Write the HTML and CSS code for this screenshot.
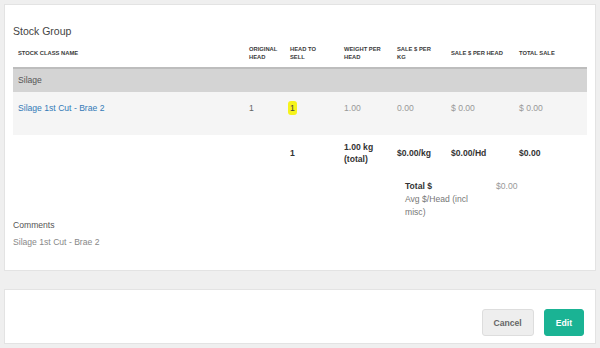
FILE: index.html
```html
<!DOCTYPE html>
<html lang="en">
<head>
    <meta charset="UTF-8">
    <title>Stock Group</title>
    <link rel="stylesheet" href="styles.css">
</head>
<body>
    <main class="page">
        <section class="ibox">
            <h2 class="ibox_title">Stock Group</h2>
            <table class="stock_table">
                <colgroup>
                    <col style="width: 231px">
                    <col style="width: 41px">
                    <col style="width: 54px">
                    <col style="width: 53px">
                    <col style="width: 54px">
                    <col style="width: 68px">
                    <col style="width: 73px">
                </colgroup>
                <thead>
                    <tr>
                        <th>Stock Class Name</th>
                        <th>Original Head</th>
                        <th>Head to Sell</th>
                        <th>Weight per Head</th>
                        <th>Sale $ per KG</th>
                        <th>Sale $ per Head</th>
                        <th>Total Sale</th>
                    </tr>
                </thead>
                <tbody>
                    <tr class="group_row">
                        <td colspan="7">Silage</td>
                    </tr>
                    <tr class="item_row">
                        <td><a href="#" class="item_link">Silage 1st Cut - Brae 2</a></td>
                        <td class="orig">1</td>
                        <td><span class="mark">1</span></td>
                        <td>1.00</td>
                        <td>0.00</td>
                        <td>$ 0.00</td>
                        <td>$ 0.00</td>
                    </tr>
                    <tr class="total_row">
                        <td></td>
                        <td></td>
                        <td>1</td>
                        <td>1.00 kg (total)</td>
                        <td>$0.00/kg</td>
                        <td>$0.00/Hd</td>
                        <td>$0.00</td>
                    </tr>
                </tbody>
            </table>
            <div class="summary">
                <div class="summary_label">
                    <strong>Total $</strong>
                    <span>Avg $/Head (incl misc)</span>
                </div>
                <div class="summary_value">$0.00</div>
            </div>
            <div class="comments">
                <div class="comments_label">Comments</div>
                <div class="comments_text">Silage 1st Cut - Brae 2</div>
            </div>
        </section>
        <section class="ibox actions">
            <button class="btn btn_cancel">Cancel</button>
            <button class="btn btn_edit">Edit</button>
        </section>
    </main>
</body>
</html>
```

FILE: styles.css
```css
* {
    box-sizing: border-box;
}
body {
    margin: 0;
    padding: 0;
    font-family: "Liberation Sans", Arial, sans-serif;
    font-size: 8.6px;
    color: #676a6c;
    background-color: #efefef;
}
.page {
    padding: 4px 4px 0 4px;
}
.ibox {
    background-color: #fff;
    border: 1px solid #e3e3e3;
    padding: 19px 8px 21px 8px;
}
.ibox_title {
    margin: 0;
    font-size: 10.5px;
    line-height: 15px;
    font-weight: normal;
    color: #444;
}
.stock_table {
    width: 100%;
    table-layout: fixed;
    border-collapse: collapse;
}
.stock_table th {
    font-size: 5.8px;
    line-height: 8px;
    font-weight: bold;
    text-transform: uppercase;
    text-align: left;
    color: #3a3a3a;
    padding: 6px 8px 6px 5px;
    vertical-align: middle;
    border-bottom: 2px solid #bdbdbd;
}
.stock_table td {
    text-align: left;
    padding: 0 8px 0 5px;
}
.group_row td {
    background-color: #d4d4d4;
    color: #555;
    line-height: 11px;
    padding-top: 6px;
    padding-bottom: 6px;
}
.item_row td {
    background-color: #f5f5f5;
    color: #999;
    line-height: 14px;
    padding-top: 9px;
    padding-bottom: 20px;
    vertical-align: top;
}
.item_row .orig {
    color: #666;
}
.item_link {
    color: #337ab7;
    text-decoration: none;
}
.mark {
    display: inline-block;
    background-color: #f6f31c;
    color: #444;
    line-height: 10px;
    padding: 2px 2px;
    margin-left: -2px;
    border-radius: 3px;
}
.total_row td {
    font-weight: bold;
    color: #333;
    line-height: 12px;
    padding-top: 6px;
    padding-bottom: 6px;
    vertical-align: middle;
}
.summary {
    display: flex;
    justify-content: flex-end;
    margin-top: 9px;
    line-height: 13px;
}
.summary_label {
    width: 91px;
    padding: 0 14px 0 5px;
    color: #777;
}
.summary_label strong {
    display: block;
    color: #333;
}
.summary_value {
    width: 96px;
    padding-left: 5px;
    color: #999;
}
.comments {
    line-height: 13px;
}
.comments_label {
    color: #555;
    margin-bottom: 4px;
}
.comments_text {
    color: #888;
}
.actions {
    margin-top: 18px;
    display: flex;
    justify-content: flex-end;
    gap: 10px;
    padding: 19px 11px 7px 8px;
}
.btn {
    height: 27px;
    padding: 0 11px;
    border-radius: 3px;
    font-family: "Liberation Sans", Arial, sans-serif;
    font-size: 8.6px;
    font-weight: bold;
    border: 1px solid transparent;
}
.btn_cancel {
    background-color: #eee;
    border-color: #ddd;
    color: #666;
}
.btn_edit {
    background-color: #1ab394;
    border-color: #1ab394;
    color: #fff;
}
```
